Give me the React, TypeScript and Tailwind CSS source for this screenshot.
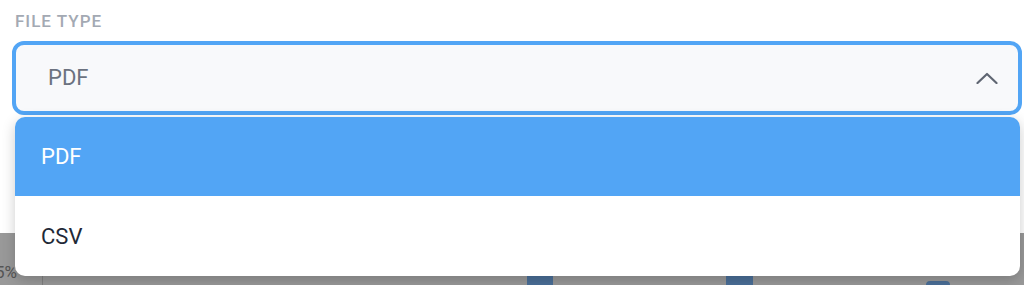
import React from "react";

export default function App() {
  return (
    <div
      className="relative w-[1024px] h-[285px] overflow-hidden bg-[#999999]"
      style={{ fontFamily: "Roboto, 'Noto Sans', sans-serif" }}
    >
      {/* modal body */}
      <div className="h-[233px] bg-white pt-[9px]">
        <div className="pl-[15px] text-[17px] leading-[24px] font-medium tracking-[1px] text-[#a3a9b3] uppercase">
          File type
        </div>
        <div className="relative ml-[12px] mt-[8px] w-[1010px]">
          <div className="flex h-[74px] items-center justify-between rounded-[12px] border-[4px] border-[#52a5f5] bg-[#f8f9fb] pl-[32px] pr-[20px]">
            <span className="text-[22px] leading-[28px] text-[#6b7280]">PDF</span>
            <svg width="22" height="12" viewBox="0 0 22 12" fill="none">
              <polyline
                points="1.5,11 11,2 20.5,11"
                stroke="#5f6672"
                strokeWidth="2.2"
                strokeLinecap="round"
                strokeLinejoin="round"
              />
            </svg>
          </div>
          {/* dropdown menu */}
          <div className="absolute left-[3px] top-[76px] z-10 w-[1005px] overflow-hidden rounded-[10px] bg-white shadow-[0_4px_14px_rgba(0,0,0,0.2)]">
            <div className="flex h-[79px] items-center bg-[#52a5f5] pl-[26px] text-[22px] text-white">
              PDF
            </div>
            <div className="flex h-[80px] items-center pl-[26px] text-[22px] text-[#1f2937]">
              CSV
            </div>
          </div>
        </div>
      </div>
      {/* dimmed chart behind */}
      <div className="flex h-[52px]">
        <div className="ml-[-5px] w-[47px] pt-[29px] text-[17px] leading-[20px] text-[#555555] whitespace-nowrap">
          5%
        </div>
        <div className="flex flex-1 items-end border-l border-[#808080] pl-[484px] gap-[173px]">
          <div className="h-[40px] w-[26px] bg-[#4b6f98]" />
          <div className="h-[40px] w-[27px] bg-[#4b6f98]" />
          <div className="h-[4px] w-[24px] rounded-t-[6px] bg-[#4b6f98]" />
        </div>
      </div>
    </div>
  );
}
